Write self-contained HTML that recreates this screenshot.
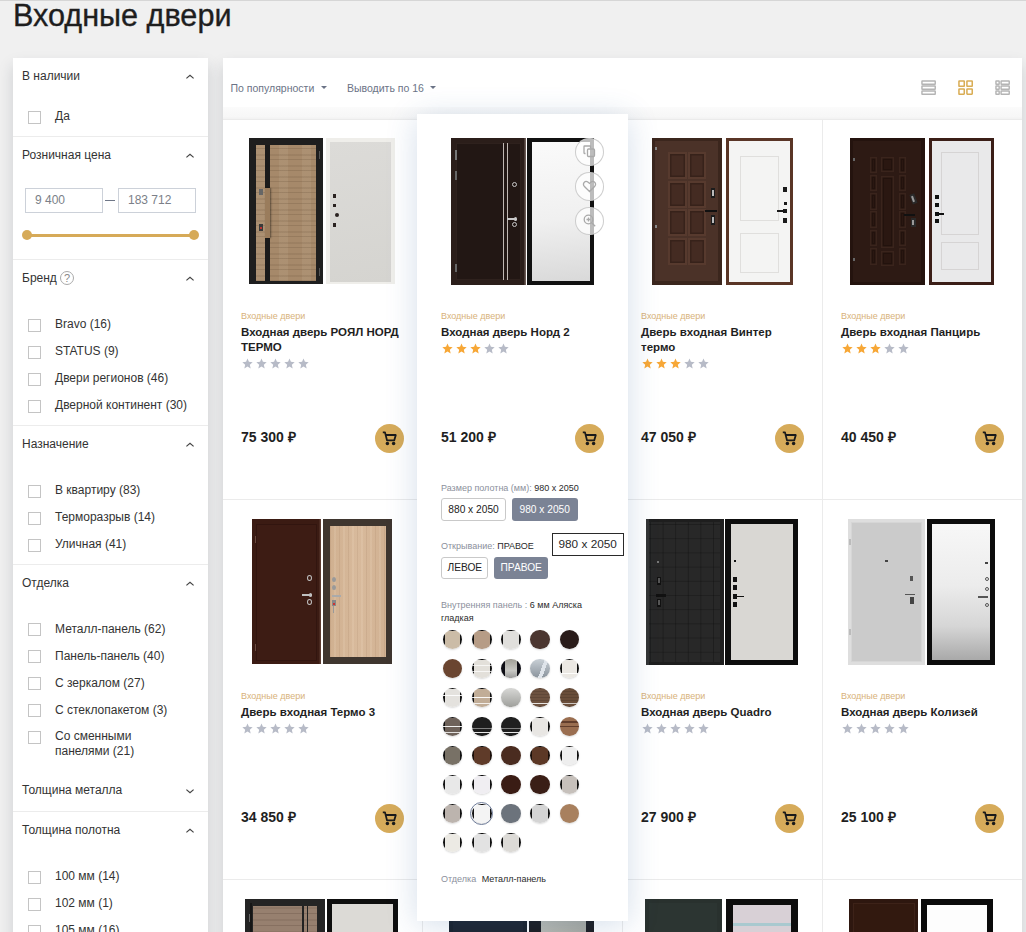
<!DOCTYPE html><html><head><meta charset="utf-8"><style>
*{margin:0;padding:0;box-sizing:border-box}
html,body{width:1026px;height:932px;overflow:hidden;background:#f0f0f0;font-family:"Liberation Sans",sans-serif}
.t{position:absolute;line-height:1;white-space:nowrap}
.cb{position:absolute;width:13px;height:13px;border:1px solid #c4c4c4;background:#fff}
.sep{position:absolute;left:13px;width:195px;height:1px;background:#ececec}
.chev{position:absolute;width:10px;height:6px}
</style></head><body>

<div style="position:absolute;left:0px;top:0px;width:1026px;height:1px;background:#d6d6d6"></div>
<div class="t" style="left:13px;top:-0.20px;font-size:30.6px;color:#1e1e1e;font-weight:400;-webkit-text-stroke:0.35px #1e1e1e">Входные двери</div>
<div style="position:absolute;left:13px;top:58px;width:195px;height:900px;background:#fff;box-shadow:0 8px 14px rgba(30,40,60,.17)"></div>
<div class="t" style="left:22px;top:70.44px;font-size:12px;color:#333;font-weight:400;">В наличии</div>
<svg style="position:absolute;left:185px;top:73px" width="10" height="7" viewBox="0 0 10 7"><path d="M1.4 5.4 L5 2.2 L8.6 5.4" fill="none" stroke="#444" stroke-width="1.2"/></svg>
<div class="cb" style="left:28px;top:111px"></div>
<div class="t" style="left:55px;top:110.24px;font-size:12px;color:#333;font-weight:400;">Да</div>
<div class="sep" style="top:136px"></div>
<div class="t" style="left:22px;top:149.24px;font-size:12px;color:#333;font-weight:400;">Розничная цена</div>
<svg style="position:absolute;left:185px;top:151.8px" width="10" height="7" viewBox="0 0 10 7"><path d="M1.4 5.4 L5 2.2 L8.6 5.4" fill="none" stroke="#444" stroke-width="1.2"/></svg>
<div style="position:absolute;left:25px;top:188px;width:78px;height:25px;border:1px solid #ccd1d9;background:#fff"></div>
<div style="position:absolute;left:118px;top:188px;width:78px;height:25px;border:1px solid #ccd1d9;background:#fff"></div>
<div class="t" style="left:35px;top:193.54px;font-size:12px;color:#7b7f88;font-weight:400;">9 400</div>
<div class="t" style="left:128px;top:193.54px;font-size:12px;color:#7b7f88;font-weight:400;">183 712</div>
<div style="position:absolute;left:105px;top:200px;width:10px;height:1px;background:#6f7787"></div>
<div style="position:absolute;left:27px;top:233.5px;width:167px;height:3px;background:#d6aa58"></div>
<div style="position:absolute;left:22px;top:230px;width:10px;height:10px;background:#d6aa58;border-radius:50%"></div>
<div style="position:absolute;left:189px;top:230px;width:10px;height:10px;background:#d6aa58;border-radius:50%"></div>
<div class="sep" style="top:259px"></div>
<div class="t" style="left:22px;top:272.44px;font-size:12px;color:#333;font-weight:400;">Бренд</div>
<svg style="position:absolute;left:185px;top:275px" width="10" height="7" viewBox="0 0 10 7"><path d="M1.4 5.4 L5 2.2 L8.6 5.4" fill="none" stroke="#444" stroke-width="1.2"/></svg>
<div style="position:absolute;left:60px;top:271px;width:14px;height:14px;border:1px solid #aaa;border-radius:50%;font-size:11px;line-height:12px;text-align:center;color:#888">?</div>
<div class="cb" style="left:28px;top:319px"></div>
<div class="t" style="left:55px;top:318.24px;font-size:12px;color:#333;font-weight:400;">Bravo (16)</div>
<div class="cb" style="left:28px;top:346px"></div>
<div class="t" style="left:55px;top:345.24px;font-size:12px;color:#333;font-weight:400;">STATUS (9)</div>
<div class="cb" style="left:28px;top:373px"></div>
<div class="t" style="left:55px;top:372.24px;font-size:12px;color:#333;font-weight:400;">Двери регионов (46)</div>
<div class="cb" style="left:28px;top:400px"></div>
<div class="t" style="left:55px;top:399.24px;font-size:12px;color:#333;font-weight:400;">Дверной континент (30)</div>
<div class="sep" style="top:425px"></div>
<div class="t" style="left:22px;top:438.04px;font-size:12px;color:#333;font-weight:400;">Назначение</div>
<svg style="position:absolute;left:185px;top:440.6px" width="10" height="7" viewBox="0 0 10 7"><path d="M1.4 5.4 L5 2.2 L8.6 5.4" fill="none" stroke="#444" stroke-width="1.2"/></svg>
<div class="cb" style="left:28px;top:484.5px"></div>
<div class="t" style="left:55px;top:483.74px;font-size:12px;color:#333;font-weight:400;">В квартиру (83)</div>
<div class="cb" style="left:28px;top:511.5px"></div>
<div class="t" style="left:55px;top:510.74px;font-size:12px;color:#333;font-weight:400;">Терморазрыв (14)</div>
<div class="cb" style="left:28px;top:538.5px"></div>
<div class="t" style="left:55px;top:537.74px;font-size:12px;color:#333;font-weight:400;">Уличная (41)</div>
<div class="sep" style="top:564px"></div>
<div class="t" style="left:22px;top:577.44px;font-size:12px;color:#333;font-weight:400;">Отделка</div>
<svg style="position:absolute;left:185px;top:580px" width="10" height="7" viewBox="0 0 10 7"><path d="M1.4 5.4 L5 2.2 L8.6 5.4" fill="none" stroke="#444" stroke-width="1.2"/></svg>
<div class="cb" style="left:28px;top:623.3px"></div>
<div class="t" style="left:55px;top:622.54px;font-size:12px;color:#333;font-weight:400;">Металл-панель (62)</div>
<div class="cb" style="left:28px;top:650.3px"></div>
<div class="t" style="left:55px;top:649.54px;font-size:12px;color:#333;font-weight:400;">Панель-панель (40)</div>
<div class="cb" style="left:28px;top:677.3px"></div>
<div class="t" style="left:55px;top:676.54px;font-size:12px;color:#333;font-weight:400;">С зеркалом (27)</div>
<div class="cb" style="left:28px;top:704.3px"></div>
<div class="t" style="left:55px;top:703.54px;font-size:12px;color:#333;font-weight:400;">С стеклопакетом (3)</div>
<div class="cb" style="left:28px;top:731.2px"></div>
<div class="t" style="left:55px;top:730.44px;font-size:12px;color:#333;font-weight:400;">Со сменными</div>
<div class="t" style="left:55px;top:745.24px;font-size:12px;color:#333;font-weight:400;">панелями (21)</div>
<div class="t" style="left:22px;top:784.44px;font-size:12px;color:#333;font-weight:400;">Толщина металла</div>
<svg style="position:absolute;left:185px;top:788px" width="10" height="7" viewBox="0 0 10 7"><path d="M1.4 1.6 L5 4.8 L8.6 1.6" fill="none" stroke="#444" stroke-width="1.2"/></svg>
<div class="sep" style="top:811px"></div>
<div class="t" style="left:22px;top:824.14px;font-size:12px;color:#333;font-weight:400;">Толщина полотна</div>
<svg style="position:absolute;left:185px;top:826.7px" width="10" height="7" viewBox="0 0 10 7"><path d="M1.4 5.4 L5 2.2 L8.6 5.4" fill="none" stroke="#444" stroke-width="1.2"/></svg>
<div class="cb" style="left:28px;top:871.2px"></div>
<div class="t" style="left:55px;top:870.44px;font-size:12px;color:#333;font-weight:400;">100 мм (14)</div>
<div class="cb" style="left:28px;top:898.2px"></div>
<div class="t" style="left:55px;top:897.44px;font-size:12px;color:#333;font-weight:400;">102 мм (1)</div>
<div class="cb" style="left:28px;top:925.2px"></div>
<div class="t" style="left:55px;top:924.44px;font-size:12px;color:#333;font-weight:400;">105 мм (16)</div>
<div style="position:absolute;left:223px;top:58px;width:799px;height:900px;background:#fff;box-shadow:0 8px 14px rgba(30,40,60,.17)"></div>
<div class="t" style="left:230.5px;top:83.31px;font-size:10.5px;color:#6b7386;font-weight:400;">По популярности</div>
<div style="position:absolute;left:320.5px;top:86px;width:0;height:0;border-left:3px solid transparent;border-right:3px solid transparent;border-top:3px solid #6b7386"></div>
<div class="t" style="left:347px;top:83.31px;font-size:10.5px;color:#6b7386;font-weight:400;">Выводить по 16</div>
<div style="position:absolute;left:430px;top:86px;width:0;height:0;border-left:3px solid transparent;border-right:3px solid transparent;border-top:3px solid #6b7386"></div>
<svg style="position:absolute;left:920.5px;top:80.3px" width="15.2" height="15.2" viewBox="0 0 16 16"><g fill="none" stroke="#b4b4b4" stroke-width="1.5"><rect x="1" y="1" width="14" height="3.4" rx=".3"/><rect x="1" y="6.3" width="14" height="3.4" rx=".3"/><rect x="1" y="11.6" width="14" height="3.4" rx=".3"/></g></svg>
<svg style="position:absolute;left:958.3px;top:80.3px" width="15.2" height="15.2" viewBox="0 0 16 16"><g fill="none" stroke="#d9ad55" stroke-width="1.6"><rect x="1" y="1" width="5.6" height="5.6" rx=".4"/><rect x="9.4" y="1" width="5.6" height="5.6" rx=".4"/><rect x="1" y="9.4" width="5.6" height="5.6" rx=".4"/><rect x="9.4" y="9.4" width="5.6" height="5.6" rx=".4"/></g></svg>
<svg style="position:absolute;left:995.3px;top:80.3px" width="15.2" height="15.2" viewBox="0 0 16 16"><g fill="none" stroke="#b4b4b4" stroke-width="1.5"><rect x="1" y="1" width="3.4" height="3.4" rx=".3"/><rect x="1" y="6.3" width="3.4" height="3.4" rx=".3"/><rect x="1" y="11.6" width="3.4" height="3.4" rx=".3"/><rect x="6.4" y="1" width="8.6" height="3.4" rx=".3"/><rect x="6.4" y="6.3" width="8.6" height="3.4" rx=".3"/><rect x="6.4" y="11.6" width="8.6" height="3.4" rx=".3"/></g></svg>
<div style="position:absolute;left:223px;top:106.5px;width:799px;height:12.5px;background:linear-gradient(180deg,#fbfbfb,#f7f7f7 80%,#f2f2f2)"></div>
<div style="position:absolute;left:223px;top:119px;width:799px;height:1px;background:#ebebeb"></div>
<div style="position:absolute;left:223px;top:499px;width:799px;height:1px;background:#ebebeb"></div>
<div style="position:absolute;left:223px;top:879.2px;width:799px;height:1px;background:#ebebeb"></div>
<div style="position:absolute;left:421.5px;top:120px;width:1px;height:812px;background:#ebebeb"></div>
<div style="position:absolute;left:621.5px;top:120px;width:1px;height:812px;background:#ebebeb"></div>
<div style="position:absolute;left:821.5px;top:120px;width:1px;height:812px;background:#ebebeb"></div>
<div style="position:absolute;left:248.5px;top:138px;width:74.5px;height:146.2px;overflow:hidden;background:#1e1e1e"><div style="position:absolute;left:7px;top:7px;width:60px;height:136px;background:repeating-linear-gradient(0deg,rgba(70,50,30,.16) 0 1px,transparent 1px 4px,rgba(70,50,30,.1) 4px 6px,transparent 6px 11px),repeating-linear-gradient(90deg,rgba(255,245,225,.07) 0 9px,transparent 9px 23px),#a6896a"></div><div style="position:absolute;left:16.5px;top:7px;width:4.7px;height:136px;background:#1b1b1b"></div><div style="position:absolute;left:16.3px;top:50px;width:5.5px;height:50px;background:#9a7c5c;box-shadow:1px 0 2px rgba(0,0,0,.45)"></div><div style="position:absolute;left:10.5px;top:51px;width:3.5px;height:6px;background:#666"></div><div style="position:absolute;left:10.5px;top:86px;width:3.5px;height:7px;background:#3a3a3a"></div><div style="position:absolute;left:11px;top:89px;width:2px;height:2px;background:#b33"></div><div style="position:absolute;left:70px;top:13px;width:1px;height:8px;background:#555"></div><div style="position:absolute;left:70px;top:130px;width:1px;height:8px;background:#555"></div></div>
<div style="position:absolute;left:326.2px;top:138px;width:69.3px;height:146.2px;overflow:hidden;background:#efeeea"><div style="position:absolute;left:4.3px;top:3.8px;width:61px;height:140px;background:linear-gradient(170deg,#dcdbd8,#d5d4d0)"></div><div style="position:absolute;left:7px;top:56px;width:3px;height:4px;background:#2a2220"></div><div style="position:absolute;left:7px;top:66px;width:3px;height:3px;background:#2a2220"></div><div style="position:absolute;left:8.5px;top:75px;width:4px;height:4px;background:#2a2220;border-radius:50%"></div><div style="position:absolute;left:7px;top:85px;width:3px;height:4px;background:#2a2220"></div></div>
<div style="position:absolute;left:651.7px;top:137.7px;width:70.0px;height:147.2px;overflow:hidden;background:#3b261d"><div style="position:absolute;left:3.5px;top:3.5px;width:63px;height:140px;background:#4b3228"></div><div style="position:absolute;left:16.6px;top:14.6px;width:18.4px;height:27px;background:#442b22;box-shadow:inset 0 0 0 2px #573a2e,inset 0 0 0 3.5px #37221a"></div><div style="position:absolute;left:16.6px;top:43.2px;width:18.4px;height:27px;background:#442b22;box-shadow:inset 0 0 0 2px #573a2e,inset 0 0 0 3.5px #37221a"></div><div style="position:absolute;left:16.6px;top:71.8px;width:18.4px;height:27px;background:#442b22;box-shadow:inset 0 0 0 2px #573a2e,inset 0 0 0 3.5px #37221a"></div><div style="position:absolute;left:16.6px;top:100.4px;width:18.4px;height:27px;background:#442b22;box-shadow:inset 0 0 0 2px #573a2e,inset 0 0 0 3.5px #37221a"></div><div style="position:absolute;left:36.400000000000006px;top:14.6px;width:18.4px;height:27px;background:#442b22;box-shadow:inset 0 0 0 2px #573a2e,inset 0 0 0 3.5px #37221a"></div><div style="position:absolute;left:36.400000000000006px;top:43.2px;width:18.4px;height:27px;background:#442b22;box-shadow:inset 0 0 0 2px #573a2e,inset 0 0 0 3.5px #37221a"></div><div style="position:absolute;left:36.400000000000006px;top:71.8px;width:18.4px;height:27px;background:#442b22;box-shadow:inset 0 0 0 2px #573a2e,inset 0 0 0 3.5px #37221a"></div><div style="position:absolute;left:36.400000000000006px;top:100.4px;width:18.4px;height:27px;background:#442b22;box-shadow:inset 0 0 0 2px #573a2e,inset 0 0 0 3.5px #37221a"></div><div style="position:absolute;left:59.5px;top:50px;width:3.5px;height:10px;background:#1c1c1c"></div><div style="position:absolute;left:60.2px;top:52px;width:2px;height:6px;background:#bbb"></div><div style="position:absolute;left:53px;top:72px;width:12px;height:2.5px;background:#111"></div><div style="position:absolute;left:59.5px;top:77px;width:3.5px;height:10px;background:#1c1c1c"></div><div style="position:absolute;left:60.2px;top:79px;width:2px;height:6px;background:#bbb"></div><div style="position:absolute;left:3px;top:9px;width:2px;height:3px;background:#888"></div><div style="position:absolute;left:3px;top:87px;width:2px;height:3px;background:#888"></div></div>
<div style="position:absolute;left:726px;top:137.7px;width:67.0px;height:147.2px;overflow:hidden;background:#5a3526"><div style="position:absolute;left:3px;top:3px;width:61px;height:141px;background:#f4f4f3"></div><div style="position:absolute;left:13.6px;top:18px;width:39.4px;height:65px;box-shadow:inset 0 0 0 1px #e0dfdd"></div><div style="position:absolute;left:13.6px;top:95px;width:39.4px;height:40px;box-shadow:inset 0 0 0 1px #e0dfdd"></div><div style="position:absolute;left:57.3px;top:49.5px;width:3.5px;height:5px;background:#1a1a1a"></div><div style="position:absolute;left:57.8px;top:64px;width:3px;height:3px;background:#1a1a1a"></div><div style="position:absolute;left:50.5px;top:72.3px;width:10px;height:2px;background:#1a1a1a"></div><div style="position:absolute;left:57.3px;top:71px;width:3.5px;height:4.5px;background:#1a1a1a"></div><div style="position:absolute;left:57.3px;top:80.5px;width:3.5px;height:4.5px;background:#1a1a1a"></div></div>
<div style="position:absolute;left:850.3px;top:137.7px;width:74.4px;height:147.2px;overflow:hidden;background:#24130e"><div style="position:absolute;left:3px;top:3px;width:68px;height:141px;background:#2d1a14"></div><div style="position:absolute;left:19.7px;top:18.9px;width:7px;height:16.5px;background:#2a1711;box-shadow:inset 0 0 0 1.5px #3a241c,inset 0 0 0 3px #22120d"></div><div style="position:absolute;left:19.7px;top:37.2px;width:7px;height:16.5px;background:#2a1711;box-shadow:inset 0 0 0 1.5px #3a241c,inset 0 0 0 3px #22120d"></div><div style="position:absolute;left:19.7px;top:55.5px;width:7px;height:16.5px;background:#2a1711;box-shadow:inset 0 0 0 1.5px #3a241c,inset 0 0 0 3px #22120d"></div><div style="position:absolute;left:19.7px;top:73.80000000000001px;width:7px;height:16.5px;background:#2a1711;box-shadow:inset 0 0 0 1.5px #3a241c,inset 0 0 0 3px #22120d"></div><div style="position:absolute;left:19.7px;top:92.1px;width:7px;height:16.5px;background:#2a1711;box-shadow:inset 0 0 0 1.5px #3a241c,inset 0 0 0 3px #22120d"></div><div style="position:absolute;left:19.7px;top:110.4px;width:7px;height:16.5px;background:#2a1711;box-shadow:inset 0 0 0 1.5px #3a241c,inset 0 0 0 3px #22120d"></div><div style="position:absolute;left:48.9px;top:18.9px;width:7px;height:16.5px;background:#2a1711;box-shadow:inset 0 0 0 1.5px #3a241c,inset 0 0 0 3px #22120d"></div><div style="position:absolute;left:48.9px;top:37.2px;width:7px;height:16.5px;background:#2a1711;box-shadow:inset 0 0 0 1.5px #3a241c,inset 0 0 0 3px #22120d"></div><div style="position:absolute;left:48.9px;top:55.5px;width:7px;height:16.5px;background:#2a1711;box-shadow:inset 0 0 0 1.5px #3a241c,inset 0 0 0 3px #22120d"></div><div style="position:absolute;left:48.9px;top:73.80000000000001px;width:7px;height:16.5px;background:#2a1711;box-shadow:inset 0 0 0 1.5px #3a241c,inset 0 0 0 3px #22120d"></div><div style="position:absolute;left:48.9px;top:92.1px;width:7px;height:16.5px;background:#2a1711;box-shadow:inset 0 0 0 1.5px #3a241c,inset 0 0 0 3px #22120d"></div><div style="position:absolute;left:48.9px;top:110.4px;width:7px;height:16.5px;background:#2a1711;box-shadow:inset 0 0 0 1.5px #3a241c,inset 0 0 0 3px #22120d"></div><div style="position:absolute;left:31px;top:18.9px;width:13px;height:15.5px;background:#2a1711;box-shadow:inset 0 0 0 1.5px #3a241c,inset 0 0 0 3px #22120d"></div><div style="position:absolute;left:31px;top:38.7px;width:13px;height:72px;background:#2a1711;box-shadow:inset 0 0 0 1.5px #3a241c,inset 0 0 0 3px #22120d"></div><div style="position:absolute;left:31px;top:113.3px;width:13px;height:15.5px;background:#2a1711;box-shadow:inset 0 0 0 1.5px #3a241c,inset 0 0 0 3px #22120d"></div><div style="position:absolute;left:60.5px;top:56px;width:4.5px;height:10px;background:#2a2a2a;transform:rotate(-20deg)"></div><div style="position:absolute;left:61.8px;top:58px;width:2px;height:6px;background:#9a9a9a;transform:rotate(-20deg)"></div><div style="position:absolute;left:54px;top:76px;width:11px;height:2.2px;background:#111"></div><div style="position:absolute;left:61px;top:80px;width:4.5px;height:9px;background:#2a2a2a"></div><div style="position:absolute;left:62.2px;top:82px;width:2px;height:5px;background:#9a9a9a"></div><div style="position:absolute;left:3px;top:20px;width:1.5px;height:3px;background:#666"></div><div style="position:absolute;left:3px;top:120px;width:1.5px;height:3px;background:#666"></div></div>
<div style="position:absolute;left:928.7px;top:137.7px;width:65.3px;height:147.2px;overflow:hidden;background:#3b1e17"><div style="position:absolute;left:3px;top:3px;width:59.3px;height:141px;background:#e9e9ea"></div><div style="position:absolute;left:12.6px;top:14.6px;width:37.7px;height:82.4px;box-shadow:inset 0 0 0 1px #d6d4d4"></div><div style="position:absolute;left:12.6px;top:104px;width:37.7px;height:28.3px;box-shadow:inset 0 0 0 1px #d6d4d4"></div><div style="position:absolute;left:6.6px;top:57px;width:3.4px;height:4px;background:#111"></div><div style="position:absolute;left:6.6px;top:65px;width:3.4px;height:4px;background:#111"></div><div style="position:absolute;left:6.6px;top:74px;width:3.4px;height:4px;background:#111"></div><div style="position:absolute;left:8px;top:75.5px;width:7px;height:1.5px;background:#111"></div><div style="position:absolute;left:6.6px;top:81px;width:3.4px;height:4px;background:#111"></div></div>
<div style="position:absolute;left:251.6px;top:518.6px;width:69.3px;height:145.8px;overflow:hidden;background:#3b1b13;box-shadow:inset -1.5px 0 0 #5b3b30"><div style="position:absolute;left:4.5px;top:5px;width:61px;height:137px;background:#3d1c14;box-shadow:inset 0 0 0 1px #32150f"></div><div style="position:absolute;left:3px;top:17px;width:1.5px;height:7px;background:#6a4a40"></div><div style="position:absolute;left:3px;top:125px;width:1.5px;height:7px;background:#6a4a40"></div><div style="position:absolute;left:55.5px;top:56px;width:5px;height:6px;border:1.3px solid #c0c0c0;border-radius:50%"></div><div style="position:absolute;left:50px;top:75.5px;width:10px;height:1.8px;background:#c0c0c0"></div><div style="position:absolute;left:57px;top:74.5px;width:3.5px;height:3.5px;background:#c0c0c0;border-radius:50%"></div><div style="position:absolute;left:55.5px;top:80px;width:5px;height:6px;border:1.3px solid #c0c0c0;border-radius:50%"></div></div>
<div style="position:absolute;left:323.1px;top:518.6px;width:69.2px;height:145.8px;overflow:hidden;background:#3f362f"><div style="position:absolute;left:7px;top:7.4px;width:56px;height:131px;background:repeating-linear-gradient(90deg,rgba(120,80,50,.10) 0 1px,transparent 1px 4px,rgba(255,240,220,.12) 4px 6px,transparent 6px 9px),linear-gradient(90deg,#d0b090,#d8ba9c 50%,#d1b192)"></div><div style="position:absolute;left:8.5px;top:58px;width:4px;height:5px;background:#999;border-radius:50%"></div><div style="position:absolute;left:8.5px;top:66px;width:4px;height:5px;background:#999;border-radius:50%"></div><div style="position:absolute;left:9px;top:76.5px;width:9px;height:2px;background:#aaa"></div><div style="position:absolute;left:9px;top:81px;width:3.5px;height:6px;background:#888"></div><div style="position:absolute;left:10px;top:84px;width:1.5px;height:2px;background:#c33"></div><div style="position:absolute;left:10px;top:87px;width:1px;height:7px;background:#999"></div></div>
<div style="position:absolute;left:646.1px;top:518.5px;width:77.6px;height:146.4px;overflow:hidden;background:#1e1e1e"><div style="position:absolute;left:3px;top:3px;width:71px;height:140px;background:#282828;background-image:linear-gradient(90deg,rgba(0,0,0,.25) 1px,transparent 1px),linear-gradient(0deg,rgba(0,0,0,.22) 1px,transparent 1px);background-size:12.6px 100%,100% 14.2px;background-position:1px 0,0 3px"></div><div style="position:absolute;left:0px;top:0px;width:3px;height:146.4px;background:#333"></div><div style="position:absolute;left:10.5px;top:42px;width:2px;height:2px;background:#777"></div><div style="position:absolute;left:11px;top:58px;width:4px;height:8px;background:#111"></div><div style="position:absolute;left:11.5px;top:59.5px;width:2.5px;height:5px;background:#555"></div><div style="position:absolute;left:10px;top:75.5px;width:10px;height:2.5px;background:#111"></div><div style="position:absolute;left:11px;top:80px;width:4px;height:8px;background:#111"></div><div style="position:absolute;left:11.5px;top:81.5px;width:2.5px;height:5px;background:#555"></div></div>
<div style="position:absolute;left:725.3px;top:518.5px;width:72.7px;height:146.4px;overflow:hidden;background:#0d0d0d"><div style="position:absolute;left:5.5px;top:5px;width:62.7px;height:136.4px;background:#d9d7d3"></div><div style="position:absolute;left:9px;top:41px;width:2px;height:2px;background:#111"></div><div style="position:absolute;left:8px;top:58px;width:4px;height:5px;background:#111"></div><div style="position:absolute;left:8px;top:66px;width:4px;height:5px;background:#111"></div><div style="position:absolute;left:8px;top:75px;width:4px;height:5px;background:#111"></div><div style="position:absolute;left:11px;top:77px;width:8px;height:1.5px;background:#111"></div><div style="position:absolute;left:8px;top:83px;width:4px;height:5px;background:#111"></div></div>
<div style="position:absolute;left:848.3px;top:518.5px;width:76.4px;height:146.4px;overflow:hidden;background:#dedede"><div style="position:absolute;left:3px;top:3px;width:70.4px;height:140.4px;background:#cbcbcb;box-shadow:inset 0 0 0 1px #d6d6d6"></div><div style="position:absolute;left:0.5px;top:20px;width:2px;height:6px;background:#bbb"></div><div style="position:absolute;left:0.5px;top:110px;width:2px;height:6px;background:#bbb"></div><div style="position:absolute;left:37px;top:41px;width:2.5px;height:2.5px;background:#444"></div><div style="position:absolute;left:62px;top:57px;width:3px;height:5px;background:#555"></div><div style="position:absolute;left:57px;top:75px;width:10px;height:1.5px;background:#555"></div><div style="position:absolute;left:62px;top:78px;width:4px;height:7px;background:#444"></div></div>
<div style="position:absolute;left:926.7px;top:518.5px;width:68.1px;height:146.4px;overflow:hidden;background:#0c0c0c"><div style="position:absolute;left:5px;top:5px;width:58.1px;height:136.4px;background:linear-gradient(180deg,#f7f7f7 0%,#ececec 45%,#d6d6d6 75%,#a9a9a9 100%)"></div><div style="position:absolute;left:58.5px;top:43px;width:2.5px;height:2.5px;background:#444"></div><div style="position:absolute;left:58px;top:58px;width:4px;height:4px;border:1px solid #555;border-radius:50%"></div><div style="position:absolute;left:58px;top:68px;width:4px;height:4px;border:1px solid #555;border-radius:50%"></div><div style="position:absolute;left:51px;top:77.5px;width:10px;height:1.5px;background:#555"></div><div style="position:absolute;left:58px;top:84px;width:4px;height:4px;border:1px solid #555;border-radius:50%"></div></div>
<div style="position:absolute;left:245.4px;top:899px;width:79.9px;height:61.0px;overflow:hidden;background:#242424"><div style="position:absolute;left:8px;top:7px;width:64px;height:80px;background:repeating-linear-gradient(0deg,rgba(60,40,30,.18) 0 1px,transparent 1px 5px,rgba(60,40,30,.1) 5px 7px,transparent 7px 12px),#97806f"></div><div style="position:absolute;left:5px;top:4px;width:2px;height:80px;background:#161616"></div><div style="position:absolute;left:57px;top:7px;width:1.3px;height:80px;background:#222"></div><div style="position:absolute;left:61.5px;top:7px;width:1.3px;height:80px;background:#222"></div><div style="position:absolute;left:4px;top:15px;width:1px;height:8px;background:#666"></div></div>
<div style="position:absolute;left:327.3px;top:899px;width:71.1px;height:61.0px;overflow:hidden;background:#0e0e0e"><div style="position:absolute;left:5px;top:5px;width:61px;height:80px;background:#dcdad6"></div></div>
<div style="position:absolute;left:449.3px;top:899px;width:77.4px;height:61.0px;overflow:hidden;background:#1a212b"><div style="position:absolute;left:4px;top:4px;width:70px;height:80px;background:#1e2530"></div></div>
<div style="position:absolute;left:529.2px;top:899px;width:64.8px;height:61.0px;overflow:hidden;background:#1c1c20"><div style="position:absolute;left:12px;top:0px;width:45px;height:80px;background:linear-gradient(90deg,#b9bab2,#a9aaa2)"></div><div style="position:absolute;left:38px;top:4px;width:6px;height:5px;background:#fff;border-radius:50%;filter:blur(1px)"></div></div>
<div style="position:absolute;left:645.2px;top:899px;width:76.6px;height:61.0px;overflow:hidden;background:#29312e"><div style="position:absolute;left:4px;top:4px;width:68px;height:80px;background:#2c3532"></div></div>
<div style="position:absolute;left:725.9px;top:899px;width:72.0px;height:61.0px;overflow:hidden;background:#0d0d0d"><div style="position:absolute;left:7px;top:6px;width:58px;height:80px;background:#d8d0d6"></div><div style="position:absolute;left:7px;top:24px;width:58px;height:3px;background:#a9c9cf"></div></div>
<div style="position:absolute;left:848.7px;top:899px;width:69.6px;height:61.0px;overflow:hidden;background:#2e170f"><div style="position:absolute;left:4px;top:4px;width:62px;height:80px;background:#32190f;box-shadow:inset 0 0 0 1px #3d2218"></div></div>
<div style="position:absolute;left:921.2px;top:899px;width:72.0px;height:61.0px;overflow:hidden;background:#0b0b0b"><div style="position:absolute;left:6px;top:6px;width:60px;height:80px;background:#fdfdfd"></div></div>
<div class="t" style="left:241px;top:312.38px;font-size:9px;color:#d8b27a;font-weight:400;">Входные двери</div>
<div class="t" style="left:241px;top:326.57px;font-size:11.5px;color:#1f1f1f;font-weight:700;">Входная дверь РОЯЛ НОРД</div>
<div class="t" style="left:241px;top:341.77px;font-size:11.5px;color:#1f1f1f;font-weight:700;">ТЕРМО</div>
<svg style="position:absolute;left:241.5px;top:358.0px" width="11" height="11" viewBox="0 0 10 10"><path d="M5 .5 L6.3 3.5 L9.7 3.8 L7.1 6.1 L7.9 9.5 L5 7.7 L2.1 9.5 L2.9 6.1 L.3 3.8 L3.7 3.5Z" fill="#b7bbc7"/></svg>
<svg style="position:absolute;left:255.7px;top:358.0px" width="11" height="11" viewBox="0 0 10 10"><path d="M5 .5 L6.3 3.5 L9.7 3.8 L7.1 6.1 L7.9 9.5 L5 7.7 L2.1 9.5 L2.9 6.1 L.3 3.8 L3.7 3.5Z" fill="#b7bbc7"/></svg>
<svg style="position:absolute;left:269.9px;top:358.0px" width="11" height="11" viewBox="0 0 10 10"><path d="M5 .5 L6.3 3.5 L9.7 3.8 L7.1 6.1 L7.9 9.5 L5 7.7 L2.1 9.5 L2.9 6.1 L.3 3.8 L3.7 3.5Z" fill="#b7bbc7"/></svg>
<svg style="position:absolute;left:284.1px;top:358.0px" width="11" height="11" viewBox="0 0 10 10"><path d="M5 .5 L6.3 3.5 L9.7 3.8 L7.1 6.1 L7.9 9.5 L5 7.7 L2.1 9.5 L2.9 6.1 L.3 3.8 L3.7 3.5Z" fill="#b7bbc7"/></svg>
<svg style="position:absolute;left:298.3px;top:358.0px" width="11" height="11" viewBox="0 0 10 10"><path d="M5 .5 L6.3 3.5 L9.7 3.8 L7.1 6.1 L7.9 9.5 L5 7.7 L2.1 9.5 L2.9 6.1 L.3 3.8 L3.7 3.5Z" fill="#b7bbc7"/></svg>
<div class="t" style="left:241px;top:429.85px;font-size:14px;color:#1f1f1f;font-weight:700;">75 300 ₽</div>
<div style="position:absolute;left:374.8px;top:423.7px;width:29px;height:29px;background:#d6ab5a;border-radius:50%"></div>
<svg style="position:absolute;left:381.8px;top:430.7px" width="15" height="15" viewBox="0 0 15 15"><path d="M.8 1.4 H3 L5 9.4 H12.2 L13.8 4 H3.8" fill="none" stroke="#1a1a1a" stroke-width="1.8" stroke-linejoin="round"/><circle cx="5.4" cy="12.6" r="1.75" fill="#1a1a1a"/><circle cx="11.6" cy="12.6" r="1.75" fill="#1a1a1a"/></svg>
<div class="t" style="left:641px;top:312.38px;font-size:9px;color:#d8b27a;font-weight:400;">Входные двери</div>
<div class="t" style="left:641px;top:326.57px;font-size:11.5px;color:#1f1f1f;font-weight:700;">Дверь входная Винтер</div>
<div class="t" style="left:641px;top:341.77px;font-size:11.5px;color:#1f1f1f;font-weight:700;">термо</div>
<svg style="position:absolute;left:641.5px;top:358.0px" width="11" height="11" viewBox="0 0 10 10"><path d="M5 .5 L6.3 3.5 L9.7 3.8 L7.1 6.1 L7.9 9.5 L5 7.7 L2.1 9.5 L2.9 6.1 L.3 3.8 L3.7 3.5Z" fill="#f7a736"/></svg>
<svg style="position:absolute;left:655.7px;top:358.0px" width="11" height="11" viewBox="0 0 10 10"><path d="M5 .5 L6.3 3.5 L9.7 3.8 L7.1 6.1 L7.9 9.5 L5 7.7 L2.1 9.5 L2.9 6.1 L.3 3.8 L3.7 3.5Z" fill="#f7a736"/></svg>
<svg style="position:absolute;left:669.9px;top:358.0px" width="11" height="11" viewBox="0 0 10 10"><path d="M5 .5 L6.3 3.5 L9.7 3.8 L7.1 6.1 L7.9 9.5 L5 7.7 L2.1 9.5 L2.9 6.1 L.3 3.8 L3.7 3.5Z" fill="#f7a736"/></svg>
<svg style="position:absolute;left:684.1px;top:358.0px" width="11" height="11" viewBox="0 0 10 10"><path d="M5 .5 L6.3 3.5 L9.7 3.8 L7.1 6.1 L7.9 9.5 L5 7.7 L2.1 9.5 L2.9 6.1 L.3 3.8 L3.7 3.5Z" fill="#b7bbc7"/></svg>
<svg style="position:absolute;left:698.3px;top:358.0px" width="11" height="11" viewBox="0 0 10 10"><path d="M5 .5 L6.3 3.5 L9.7 3.8 L7.1 6.1 L7.9 9.5 L5 7.7 L2.1 9.5 L2.9 6.1 L.3 3.8 L3.7 3.5Z" fill="#b7bbc7"/></svg>
<div class="t" style="left:641px;top:429.85px;font-size:14px;color:#1f1f1f;font-weight:700;">47 050 ₽</div>
<div style="position:absolute;left:774.8px;top:423.7px;width:29px;height:29px;background:#d6ab5a;border-radius:50%"></div>
<svg style="position:absolute;left:781.8px;top:430.7px" width="15" height="15" viewBox="0 0 15 15"><path d="M.8 1.4 H3 L5 9.4 H12.2 L13.8 4 H3.8" fill="none" stroke="#1a1a1a" stroke-width="1.8" stroke-linejoin="round"/><circle cx="5.4" cy="12.6" r="1.75" fill="#1a1a1a"/><circle cx="11.6" cy="12.6" r="1.75" fill="#1a1a1a"/></svg>
<div class="t" style="left:841px;top:312.38px;font-size:9px;color:#d8b27a;font-weight:400;">Входные двери</div>
<div class="t" style="left:841px;top:326.57px;font-size:11.5px;color:#1f1f1f;font-weight:700;">Дверь входная Панцирь</div>
<svg style="position:absolute;left:841.5px;top:342.8px" width="11" height="11" viewBox="0 0 10 10"><path d="M5 .5 L6.3 3.5 L9.7 3.8 L7.1 6.1 L7.9 9.5 L5 7.7 L2.1 9.5 L2.9 6.1 L.3 3.8 L3.7 3.5Z" fill="#f7a736"/></svg>
<svg style="position:absolute;left:855.7px;top:342.8px" width="11" height="11" viewBox="0 0 10 10"><path d="M5 .5 L6.3 3.5 L9.7 3.8 L7.1 6.1 L7.9 9.5 L5 7.7 L2.1 9.5 L2.9 6.1 L.3 3.8 L3.7 3.5Z" fill="#f7a736"/></svg>
<svg style="position:absolute;left:869.9px;top:342.8px" width="11" height="11" viewBox="0 0 10 10"><path d="M5 .5 L6.3 3.5 L9.7 3.8 L7.1 6.1 L7.9 9.5 L5 7.7 L2.1 9.5 L2.9 6.1 L.3 3.8 L3.7 3.5Z" fill="#f7a736"/></svg>
<svg style="position:absolute;left:884.1px;top:342.8px" width="11" height="11" viewBox="0 0 10 10"><path d="M5 .5 L6.3 3.5 L9.7 3.8 L7.1 6.1 L7.9 9.5 L5 7.7 L2.1 9.5 L2.9 6.1 L.3 3.8 L3.7 3.5Z" fill="#b7bbc7"/></svg>
<svg style="position:absolute;left:898.3px;top:342.8px" width="11" height="11" viewBox="0 0 10 10"><path d="M5 .5 L6.3 3.5 L9.7 3.8 L7.1 6.1 L7.9 9.5 L5 7.7 L2.1 9.5 L2.9 6.1 L.3 3.8 L3.7 3.5Z" fill="#b7bbc7"/></svg>
<div class="t" style="left:841px;top:429.85px;font-size:14px;color:#1f1f1f;font-weight:700;">40 450 ₽</div>
<div style="position:absolute;left:974.8px;top:423.7px;width:29px;height:29px;background:#d6ab5a;border-radius:50%"></div>
<svg style="position:absolute;left:981.8px;top:430.7px" width="15" height="15" viewBox="0 0 15 15"><path d="M.8 1.4 H3 L5 9.4 H12.2 L13.8 4 H3.8" fill="none" stroke="#1a1a1a" stroke-width="1.8" stroke-linejoin="round"/><circle cx="5.4" cy="12.6" r="1.75" fill="#1a1a1a"/><circle cx="11.6" cy="12.6" r="1.75" fill="#1a1a1a"/></svg>
<div class="t" style="left:241px;top:692.38px;font-size:9px;color:#d8b27a;font-weight:400;">Входные двери</div>
<div class="t" style="left:241px;top:706.57px;font-size:11.5px;color:#1f1f1f;font-weight:700;">Дверь входная Термо 3</div>
<svg style="position:absolute;left:241.5px;top:722.8px" width="11" height="11" viewBox="0 0 10 10"><path d="M5 .5 L6.3 3.5 L9.7 3.8 L7.1 6.1 L7.9 9.5 L5 7.7 L2.1 9.5 L2.9 6.1 L.3 3.8 L3.7 3.5Z" fill="#b7bbc7"/></svg>
<svg style="position:absolute;left:255.7px;top:722.8px" width="11" height="11" viewBox="0 0 10 10"><path d="M5 .5 L6.3 3.5 L9.7 3.8 L7.1 6.1 L7.9 9.5 L5 7.7 L2.1 9.5 L2.9 6.1 L.3 3.8 L3.7 3.5Z" fill="#b7bbc7"/></svg>
<svg style="position:absolute;left:269.9px;top:722.8px" width="11" height="11" viewBox="0 0 10 10"><path d="M5 .5 L6.3 3.5 L9.7 3.8 L7.1 6.1 L7.9 9.5 L5 7.7 L2.1 9.5 L2.9 6.1 L.3 3.8 L3.7 3.5Z" fill="#b7bbc7"/></svg>
<svg style="position:absolute;left:284.1px;top:722.8px" width="11" height="11" viewBox="0 0 10 10"><path d="M5 .5 L6.3 3.5 L9.7 3.8 L7.1 6.1 L7.9 9.5 L5 7.7 L2.1 9.5 L2.9 6.1 L.3 3.8 L3.7 3.5Z" fill="#b7bbc7"/></svg>
<svg style="position:absolute;left:298.3px;top:722.8px" width="11" height="11" viewBox="0 0 10 10"><path d="M5 .5 L6.3 3.5 L9.7 3.8 L7.1 6.1 L7.9 9.5 L5 7.7 L2.1 9.5 L2.9 6.1 L.3 3.8 L3.7 3.5Z" fill="#b7bbc7"/></svg>
<div class="t" style="left:241px;top:809.85px;font-size:14px;color:#1f1f1f;font-weight:700;">34 850 ₽</div>
<div style="position:absolute;left:374.8px;top:803.7px;width:29px;height:29px;background:#d6ab5a;border-radius:50%"></div>
<svg style="position:absolute;left:381.8px;top:810.7px" width="15" height="15" viewBox="0 0 15 15"><path d="M.8 1.4 H3 L5 9.4 H12.2 L13.8 4 H3.8" fill="none" stroke="#1a1a1a" stroke-width="1.8" stroke-linejoin="round"/><circle cx="5.4" cy="12.6" r="1.75" fill="#1a1a1a"/><circle cx="11.6" cy="12.6" r="1.75" fill="#1a1a1a"/></svg>
<div class="t" style="left:641px;top:692.38px;font-size:9px;color:#d8b27a;font-weight:400;">Входные двери</div>
<div class="t" style="left:641px;top:706.57px;font-size:11.5px;color:#1f1f1f;font-weight:700;">Входная дверь Quadro</div>
<svg style="position:absolute;left:641.5px;top:722.8px" width="11" height="11" viewBox="0 0 10 10"><path d="M5 .5 L6.3 3.5 L9.7 3.8 L7.1 6.1 L7.9 9.5 L5 7.7 L2.1 9.5 L2.9 6.1 L.3 3.8 L3.7 3.5Z" fill="#b7bbc7"/></svg>
<svg style="position:absolute;left:655.7px;top:722.8px" width="11" height="11" viewBox="0 0 10 10"><path d="M5 .5 L6.3 3.5 L9.7 3.8 L7.1 6.1 L7.9 9.5 L5 7.7 L2.1 9.5 L2.9 6.1 L.3 3.8 L3.7 3.5Z" fill="#b7bbc7"/></svg>
<svg style="position:absolute;left:669.9px;top:722.8px" width="11" height="11" viewBox="0 0 10 10"><path d="M5 .5 L6.3 3.5 L9.7 3.8 L7.1 6.1 L7.9 9.5 L5 7.7 L2.1 9.5 L2.9 6.1 L.3 3.8 L3.7 3.5Z" fill="#b7bbc7"/></svg>
<svg style="position:absolute;left:684.1px;top:722.8px" width="11" height="11" viewBox="0 0 10 10"><path d="M5 .5 L6.3 3.5 L9.7 3.8 L7.1 6.1 L7.9 9.5 L5 7.7 L2.1 9.5 L2.9 6.1 L.3 3.8 L3.7 3.5Z" fill="#b7bbc7"/></svg>
<svg style="position:absolute;left:698.3px;top:722.8px" width="11" height="11" viewBox="0 0 10 10"><path d="M5 .5 L6.3 3.5 L9.7 3.8 L7.1 6.1 L7.9 9.5 L5 7.7 L2.1 9.5 L2.9 6.1 L.3 3.8 L3.7 3.5Z" fill="#b7bbc7"/></svg>
<div class="t" style="left:641px;top:809.85px;font-size:14px;color:#1f1f1f;font-weight:700;">27 900 ₽</div>
<div style="position:absolute;left:774.8px;top:803.7px;width:29px;height:29px;background:#d6ab5a;border-radius:50%"></div>
<svg style="position:absolute;left:781.8px;top:810.7px" width="15" height="15" viewBox="0 0 15 15"><path d="M.8 1.4 H3 L5 9.4 H12.2 L13.8 4 H3.8" fill="none" stroke="#1a1a1a" stroke-width="1.8" stroke-linejoin="round"/><circle cx="5.4" cy="12.6" r="1.75" fill="#1a1a1a"/><circle cx="11.6" cy="12.6" r="1.75" fill="#1a1a1a"/></svg>
<div class="t" style="left:841px;top:692.38px;font-size:9px;color:#d8b27a;font-weight:400;">Входные двери</div>
<div class="t" style="left:841px;top:706.57px;font-size:11.5px;color:#1f1f1f;font-weight:700;">Входная дверь Колизей</div>
<svg style="position:absolute;left:841.5px;top:722.8px" width="11" height="11" viewBox="0 0 10 10"><path d="M5 .5 L6.3 3.5 L9.7 3.8 L7.1 6.1 L7.9 9.5 L5 7.7 L2.1 9.5 L2.9 6.1 L.3 3.8 L3.7 3.5Z" fill="#b7bbc7"/></svg>
<svg style="position:absolute;left:855.7px;top:722.8px" width="11" height="11" viewBox="0 0 10 10"><path d="M5 .5 L6.3 3.5 L9.7 3.8 L7.1 6.1 L7.9 9.5 L5 7.7 L2.1 9.5 L2.9 6.1 L.3 3.8 L3.7 3.5Z" fill="#b7bbc7"/></svg>
<svg style="position:absolute;left:869.9px;top:722.8px" width="11" height="11" viewBox="0 0 10 10"><path d="M5 .5 L6.3 3.5 L9.7 3.8 L7.1 6.1 L7.9 9.5 L5 7.7 L2.1 9.5 L2.9 6.1 L.3 3.8 L3.7 3.5Z" fill="#b7bbc7"/></svg>
<svg style="position:absolute;left:884.1px;top:722.8px" width="11" height="11" viewBox="0 0 10 10"><path d="M5 .5 L6.3 3.5 L9.7 3.8 L7.1 6.1 L7.9 9.5 L5 7.7 L2.1 9.5 L2.9 6.1 L.3 3.8 L3.7 3.5Z" fill="#b7bbc7"/></svg>
<svg style="position:absolute;left:898.3px;top:722.8px" width="11" height="11" viewBox="0 0 10 10"><path d="M5 .5 L6.3 3.5 L9.7 3.8 L7.1 6.1 L7.9 9.5 L5 7.7 L2.1 9.5 L2.9 6.1 L.3 3.8 L3.7 3.5Z" fill="#b7bbc7"/></svg>
<div class="t" style="left:841px;top:809.85px;font-size:14px;color:#1f1f1f;font-weight:700;">25 100 ₽</div>
<div style="position:absolute;left:974.8px;top:803.7px;width:29px;height:29px;background:#d6ab5a;border-radius:50%"></div>
<svg style="position:absolute;left:981.8px;top:810.7px" width="15" height="15" viewBox="0 0 15 15"><path d="M.8 1.4 H3 L5 9.4 H12.2 L13.8 4 H3.8" fill="none" stroke="#1a1a1a" stroke-width="1.8" stroke-linejoin="round"/><circle cx="5.4" cy="12.6" r="1.75" fill="#1a1a1a"/><circle cx="11.6" cy="12.6" r="1.75" fill="#1a1a1a"/></svg>
<div style="position:absolute;left:417px;top:114px;width:211px;height:806.5px;background:#fff;box-shadow:0 4px 30px rgba(40,90,150,.2)"></div>
<div style="position:absolute;left:450.7px;top:137.8px;width:75.3px;height:146.9px;overflow:hidden;background:#2b1e1a;box-shadow:inset -1.5px 0 0 #6a5a55"><div style="position:absolute;left:5px;top:5px;width:65px;height:137px;background:#221714;box-shadow:inset 0 0 0 1px #2e211d"></div><div style="position:absolute;left:52px;top:5px;width:1.2px;height:137px;background:#c0b8b3"></div><div style="position:absolute;left:56px;top:5px;width:1.2px;height:137px;background:#c0b8b3"></div><div style="position:absolute;left:4.5px;top:12px;width:1.5px;height:10px;background:#777"></div><div style="position:absolute;left:4.5px;top:33px;width:1.5px;height:9px;background:#666"></div><div style="position:absolute;left:4.5px;top:126px;width:1.5px;height:8px;background:#666"></div><div style="position:absolute;left:61px;top:44px;width:5px;height:5px;border:1.3px solid #c8c8c8;border-radius:50%"></div><div style="position:absolute;left:56px;top:80.5px;width:9px;height:1.8px;background:#c8c8c8"></div><div style="position:absolute;left:63px;top:79.5px;width:3.5px;height:3.5px;background:#c8c8c8;border-radius:50%"></div><div style="position:absolute;left:61px;top:84px;width:5px;height:5px;border:1.3px solid #c8c8c8;border-radius:50%"></div></div>
<div style="position:absolute;left:527.3px;top:137.8px;width:66.7px;height:146.9px;overflow:hidden;background:#111"><div style="position:absolute;left:5px;top:4px;width:57.7px;height:139px;background:linear-gradient(175deg,#fafafa 0%,#f0f0f0 55%,#d9d9d9 100%)"></div></div>
<div style="position:absolute;left:575px;top:137.5px;width:28.5px;height:28.5px;background:rgba(255,255,255,.72);border:1px solid rgba(200,200,200,.9);border-radius:50%"></div>
<div style="position:absolute;left:575px;top:172.0px;width:28.5px;height:28.5px;background:rgba(255,255,255,.72);border:1px solid rgba(200,200,200,.9);border-radius:50%"></div>
<div style="position:absolute;left:575px;top:206.8px;width:28.5px;height:28.5px;background:rgba(255,255,255,.72);border:1px solid rgba(200,200,200,.9);border-radius:50%"></div>
<svg style="position:absolute;left:582px;top:144px" width="15" height="15" viewBox="0 0 15 15"><g fill="none" stroke="#a9a9a9" stroke-width="1.3"><path d="M3.5 9.5 H2.5 Q2 9.5 2 9 V2.5 Q2 2 2.5 2 H8 Q8.5 2 8.5 2.5 V4"/><rect x="5.5" y="5" width="7" height="7.5" rx="1"/></g></svg>
<svg style="position:absolute;left:582px;top:179px" width="15" height="15" viewBox="0 0 15 15"><path d="M7.5 12.5 L2.2 7.2 Q.8 5.5 2 3.6 Q3.6 1.8 5.6 2.8 L7.5 4.4 L9.4 2.8 Q11.4 1.8 13 3.6 Q14.2 5.5 12.8 7.2Z" fill="none" stroke="#a9a9a9" stroke-width="1.3"/></svg>
<svg style="position:absolute;left:582px;top:213px" width="15" height="15" viewBox="0 0 15 15"><g fill="none" stroke="#a9a9a9" stroke-width="1.3"><circle cx="6.5" cy="6.5" r="4.3"/><path d="M9.7 9.7 L13.2 13.2 M6.5 4.5 V8.5 M4.5 6.5 H8.5"/></g></svg>
<div class="t" style="left:441px;top:312.38px;font-size:9px;color:#d8b27a;font-weight:400;">Входные двери</div>
<div class="t" style="left:441px;top:326.57px;font-size:11.5px;color:#1f1f1f;font-weight:700;">Входная дверь Норд 2</div>
<svg style="position:absolute;left:441.5px;top:342.8px" width="11" height="11" viewBox="0 0 10 10"><path d="M5 .5 L6.3 3.5 L9.7 3.8 L7.1 6.1 L7.9 9.5 L5 7.7 L2.1 9.5 L2.9 6.1 L.3 3.8 L3.7 3.5Z" fill="#f7a736"/></svg>
<svg style="position:absolute;left:455.7px;top:342.8px" width="11" height="11" viewBox="0 0 10 10"><path d="M5 .5 L6.3 3.5 L9.7 3.8 L7.1 6.1 L7.9 9.5 L5 7.7 L2.1 9.5 L2.9 6.1 L.3 3.8 L3.7 3.5Z" fill="#f7a736"/></svg>
<svg style="position:absolute;left:469.9px;top:342.8px" width="11" height="11" viewBox="0 0 10 10"><path d="M5 .5 L6.3 3.5 L9.7 3.8 L7.1 6.1 L7.9 9.5 L5 7.7 L2.1 9.5 L2.9 6.1 L.3 3.8 L3.7 3.5Z" fill="#f7a736"/></svg>
<svg style="position:absolute;left:484.1px;top:342.8px" width="11" height="11" viewBox="0 0 10 10"><path d="M5 .5 L6.3 3.5 L9.7 3.8 L7.1 6.1 L7.9 9.5 L5 7.7 L2.1 9.5 L2.9 6.1 L.3 3.8 L3.7 3.5Z" fill="#b7bbc7"/></svg>
<svg style="position:absolute;left:498.3px;top:342.8px" width="11" height="11" viewBox="0 0 10 10"><path d="M5 .5 L6.3 3.5 L9.7 3.8 L7.1 6.1 L7.9 9.5 L5 7.7 L2.1 9.5 L2.9 6.1 L.3 3.8 L3.7 3.5Z" fill="#b7bbc7"/></svg>
<div class="t" style="left:441px;top:429.85px;font-size:14px;color:#1f1f1f;font-weight:700;">51 200 ₽</div>
<div style="position:absolute;left:574.8px;top:423.7px;width:29px;height:29px;background:#d6ab5a;border-radius:50%"></div>
<svg style="position:absolute;left:581.8px;top:430.7px" width="15" height="15" viewBox="0 0 15 15"><path d="M.8 1.4 H3 L5 9.4 H12.2 L13.8 4 H3.8" fill="none" stroke="#1a1a1a" stroke-width="1.8" stroke-linejoin="round"/><circle cx="5.4" cy="12.6" r="1.75" fill="#1a1a1a"/><circle cx="11.6" cy="12.6" r="1.75" fill="#1a1a1a"/></svg>
<div class="t" style="left:441px;top:484.08px;font-size:9px;color:#8b909c">Размер полотна (мм): <span style="color:#2a2a2a">980 x 2050</span></div>
<div style="position:absolute;left:441px;top:498.4px;width:64.5px;height:22.5px;border:1px solid #c9c9c9;border-radius:3px;background:#fff"></div>
<div style="position:absolute;left:512.4px;top:498.4px;width:65.3px;height:22.5px;border-radius:3px;background:#7b8395"></div>
<div class="t" style="left:448.3px;top:504.97px;font-size:10.2px;color:#222;font-weight:400;">880 x 2050</div>
<div class="t" style="left:519.5px;top:504.97px;font-size:10.2px;color:#fff;font-weight:400;">980 x 2050</div>
<div class="t" style="left:441px;top:542.18px;font-size:9px;color:#8b909c">Открывание: <span style="color:#2a2a2a">ПРАВОЕ</span></div>
<div style="position:absolute;left:441px;top:556.5px;width:46.6px;height:22.8px;border:1px solid #c9c9c9;border-radius:3px;background:#fff"></div>
<div style="position:absolute;left:494px;top:556.5px;width:53.7px;height:22.8px;border-radius:3px;background:#7b8395"></div>
<div class="t" style="left:447.5px;top:562.67px;font-size:10.2px;color:#222;font-weight:400;">ЛЕВОЕ</div>
<div class="t" style="left:500.5px;top:562.67px;font-size:10.2px;color:#fff;font-weight:400;">ПРАВОЕ</div>
<div style="position:absolute;left:552px;top:533px;width:71.7px;height:23px;border:1px solid #2a2a2a;background:#fff"></div>
<div class="t" style="left:558.5px;top:539.31px;font-size:11.8px;color:#2a2a2a;font-weight:400;">980 x 2050</div>
<div class="t" style="left:441px;top:601.18px;font-size:9px;color:#8b909c">Внутренняя панель : <span style="color:#2a2a2a">6 мм Аляска</span></div>
<div class="t" style="left:441px;top:613.58px;font-size:9px;color:#2a2a2a;font-weight:400;">гладкая</div>
<div style="position:absolute;left:442.8px;top:629.7px;width:19.6px;height:19.6px;background:linear-gradient(180deg,#111 0 7%,transparent 7%),linear-gradient(90deg,#111 0 9%,#cbbca7 9% 91%,#111 91%);border-radius:50%;box-shadow:0 1px 2px rgba(0,0,0,.15)"></div>
<div style="position:absolute;left:472.0px;top:629.7px;width:19.6px;height:19.6px;background:linear-gradient(180deg,#111 0 7%,transparent 7%),linear-gradient(90deg,#111 0 9%,#b69c86 9% 91%,#111 91%);border-radius:50%;box-shadow:0 1px 2px rgba(0,0,0,.15)"></div>
<div style="position:absolute;left:501.2px;top:629.7px;width:19.6px;height:19.6px;background:linear-gradient(180deg,#111 0 7%,transparent 7%),linear-gradient(90deg,#111 0 9%,#e0dfdc 9% 91%,#111 91%);border-radius:50%;box-shadow:0 1px 2px rgba(0,0,0,.15)"></div>
<div style="position:absolute;left:530.4000000000001px;top:629.7px;width:19.6px;height:19.6px;background:#4b3630;border-radius:50%;box-shadow:0 1px 2px rgba(0,0,0,.15)"></div>
<div style="position:absolute;left:559.6px;top:629.7px;width:19.6px;height:19.6px;background:#2a1c1a;border-radius:50%;box-shadow:0 1px 2px rgba(0,0,0,.15)"></div>
<div style="position:absolute;left:442.8px;top:658.7px;width:19.6px;height:19.6px;background:#6a4530;border-radius:50%;box-shadow:0 1px 2px rgba(0,0,0,.15)"></div>
<div style="position:absolute;left:472.0px;top:658.7px;width:19.6px;height:19.6px;background:linear-gradient(180deg,transparent 30%,rgba(255,255,255,.7) 30% 36%,transparent 36% 62%,rgba(255,255,255,.7) 62% 68%,transparent 68%),linear-gradient(180deg,#111 0 7%,transparent 7%),linear-gradient(90deg,#111 0 9%,#e3e0da 9% 91%,#111 91%);border-radius:50%;box-shadow:0 1px 2px rgba(0,0,0,.15)"></div>
<div style="position:absolute;left:501.2px;top:658.7px;width:19.6px;height:19.6px;background:linear-gradient(90deg,#0d0d14 0 22%,transparent 22% 78%,#0d0d14 78%),linear-gradient(180deg,#a09e96,#c8c8c4 60%,#9a9a9a),linear-gradient(180deg,#111 0 7%,transparent 7%),linear-gradient(90deg,#111 0 9%,#8c8a82 9% 91%,#111 91%);border-radius:50%;box-shadow:0 1px 2px rgba(0,0,0,.15)"></div>
<div style="position:absolute;left:530.4000000000001px;top:658.7px;width:19.6px;height:19.6px;background:linear-gradient(110deg,transparent 55%,#dfe4ea 55% 70%,transparent 70%),linear-gradient(180deg,#c9d0d6,#8a939c),linear-gradient(180deg,#111 0 7%,transparent 7%),linear-gradient(90deg,#111 0 9%,#a4aab0 9% 91%,#111 91%);border-radius:50%;box-shadow:0 1px 2px rgba(0,0,0,.15)"></div>
<div style="position:absolute;left:559.6px;top:658.7px;width:19.6px;height:19.6px;background:linear-gradient(180deg,transparent 75%,rgba(255,255,255,.9) 75% 80%,transparent 80%),linear-gradient(180deg,#111 0 7%,transparent 7%),linear-gradient(90deg,#111 0 9%,#ebe8e3 9% 91%,#111 91%);border-radius:50%;box-shadow:0 1px 2px rgba(0,0,0,.15)"></div>
<div style="position:absolute;left:442.8px;top:687.7px;width:19.6px;height:19.6px;background:linear-gradient(180deg,transparent 35%,rgba(255,255,255,.9) 35% 41%,transparent 41%),linear-gradient(180deg,#111 0 7%,transparent 7%),linear-gradient(90deg,#111 0 9%,#e4e2de 9% 91%,#111 91%);border-radius:50%;box-shadow:0 1px 2px rgba(0,0,0,.15)"></div>
<div style="position:absolute;left:472.0px;top:687.7px;width:19.6px;height:19.6px;background:linear-gradient(180deg,transparent 45%,rgba(255,255,255,.9) 45% 53%,transparent 53% 80%,rgba(255,255,255,.8) 80% 86%,transparent 86%),linear-gradient(180deg,#111 0 7%,transparent 7%),linear-gradient(90deg,#111 0 9%,#c1ad97 9% 91%,#111 91%);border-radius:50%;box-shadow:0 1px 2px rgba(0,0,0,.15)"></div>
<div style="position:absolute;left:501.2px;top:687.7px;width:19.6px;height:19.6px;background:linear-gradient(180deg,#d8d8d6,#9fa09c),linear-gradient(180deg,#111 0 7%,transparent 7%),linear-gradient(90deg,#111 0 9%,#b2b2ae 9% 91%,#111 91%);border-radius:50%;box-shadow:0 1px 2px rgba(0,0,0,.15)"></div>
<div style="position:absolute;left:530.4000000000001px;top:687.7px;width:19.6px;height:19.6px;background:linear-gradient(180deg,transparent 78%,rgba(255,255,255,.85) 78% 84%,transparent 84%),repeating-linear-gradient(180deg,rgba(0,0,0,.12) 0 1px,transparent 1px 3px),#6d5240;border-radius:50%;box-shadow:0 1px 2px rgba(0,0,0,.15)"></div>
<div style="position:absolute;left:559.6px;top:687.7px;width:19.6px;height:19.6px;background:linear-gradient(180deg,transparent 78%,rgba(255,255,255,.7) 78% 84%,transparent 84%),repeating-linear-gradient(180deg,rgba(0,0,0,.12) 0 1px,transparent 1px 3px),#694d39;border-radius:50%;box-shadow:0 1px 2px rgba(0,0,0,.15)"></div>
<div style="position:absolute;left:442.8px;top:716.7px;width:19.6px;height:19.6px;background:linear-gradient(180deg,transparent 48%,rgba(255,255,255,.9) 48% 55%,transparent 55% 80%,rgba(255,255,255,.8) 80% 86%,transparent 86%),linear-gradient(180deg,#111 0 7%,transparent 7%),linear-gradient(90deg,#111 0 9%,#6e625a 9% 91%,#111 91%);border-radius:50%;box-shadow:0 1px 2px rgba(0,0,0,.15)"></div>
<div style="position:absolute;left:472.0px;top:716.7px;width:19.6px;height:19.6px;background:linear-gradient(180deg,transparent 58%,rgba(150,150,150,.8) 58% 63%,transparent 63% 80%,rgba(255,255,255,.9) 80% 86%,transparent 86%),#1e1e1e;border-radius:50%;box-shadow:0 1px 2px rgba(0,0,0,.15)"></div>
<div style="position:absolute;left:501.2px;top:716.7px;width:19.6px;height:19.6px;background:linear-gradient(180deg,transparent 58%,rgba(150,150,150,.8) 58% 63%,transparent 63% 80%,rgba(255,255,255,.9) 80% 86%,transparent 86%),#202020;border-radius:50%;box-shadow:0 1px 2px rgba(0,0,0,.15)"></div>
<div style="position:absolute;left:530.4000000000001px;top:716.7px;width:19.6px;height:19.6px;background:linear-gradient(180deg,#111 0 7%,transparent 7%),linear-gradient(90deg,#111 0 9%,#e8e6e3 9% 91%,#111 91%);border-radius:50%;box-shadow:0 1px 2px rgba(0,0,0,.15)"></div>
<div style="position:absolute;left:559.6px;top:716.7px;width:19.6px;height:19.6px;background:linear-gradient(180deg,transparent 22%,rgba(60,30,20,.6) 22% 30%,transparent 30% 48%,rgba(60,30,20,.6) 48% 55%,transparent 55%),#9a6e50;border-radius:50%;box-shadow:0 1px 2px rgba(0,0,0,.15)"></div>
<div style="position:absolute;left:442.8px;top:745.7px;width:19.6px;height:19.6px;background:linear-gradient(180deg,#111 0 7%,transparent 7%),linear-gradient(90deg,#111 0 9%,#787166 9% 91%,#111 91%);border-radius:50%;box-shadow:0 1px 2px rgba(0,0,0,.15)"></div>
<div style="position:absolute;left:472.0px;top:745.7px;width:19.6px;height:19.6px;background:linear-gradient(90deg,#1a0f0a 0 12%,transparent 12% 88%,#1a0f0a 88%),linear-gradient(180deg,#111 0 7%,transparent 7%),linear-gradient(90deg,#111 0 9%,#5f3b29 9% 91%,#111 91%);border-radius:50%;box-shadow:0 1px 2px rgba(0,0,0,.15)"></div>
<div style="position:absolute;left:501.2px;top:745.7px;width:19.6px;height:19.6px;background:#4a2c20;border-radius:50%;box-shadow:0 1px 2px rgba(0,0,0,.15)"></div>
<div style="position:absolute;left:530.4000000000001px;top:745.7px;width:19.6px;height:19.6px;background:linear-gradient(90deg,#1a0f0a 0 12%,transparent 12% 88%,#1a0f0a 88%),linear-gradient(180deg,#111 0 7%,transparent 7%),linear-gradient(90deg,#111 0 9%,#5c3826 9% 91%,#111 91%);border-radius:50%;box-shadow:0 1px 2px rgba(0,0,0,.15)"></div>
<div style="position:absolute;left:559.6px;top:745.7px;width:19.6px;height:19.6px;background:linear-gradient(180deg,#111 0 7%,transparent 7%),linear-gradient(90deg,#111 0 9%,#eeeeee 9% 91%,#111 91%);border-radius:50%;box-shadow:0 1px 2px rgba(0,0,0,.15)"></div>
<div style="position:absolute;left:442.8px;top:774.7px;width:19.6px;height:19.6px;background:linear-gradient(180deg,#111 0 7%,transparent 7%),linear-gradient(90deg,#111 0 9%,#e8e8e8 9% 91%,#111 91%);border-radius:50%;box-shadow:0 1px 2px rgba(0,0,0,.15)"></div>
<div style="position:absolute;left:472.0px;top:774.7px;width:19.6px;height:19.6px;background:linear-gradient(180deg,#111 0 7%,transparent 7%),linear-gradient(90deg,#111 0 9%,#f0eef2 9% 91%,#111 91%);border-radius:50%;box-shadow:0 1px 2px rgba(0,0,0,.15)"></div>
<div style="position:absolute;left:501.2px;top:774.7px;width:19.6px;height:19.6px;background:#3a1c14;border-radius:50%;box-shadow:0 1px 2px rgba(0,0,0,.15)"></div>
<div style="position:absolute;left:530.4000000000001px;top:774.7px;width:19.6px;height:19.6px;background:#3a1e16;border-radius:50%;box-shadow:0 1px 2px rgba(0,0,0,.15)"></div>
<div style="position:absolute;left:559.6px;top:774.7px;width:19.6px;height:19.6px;background:linear-gradient(180deg,#111 0 7%,transparent 7%),linear-gradient(90deg,#111 0 9%,#c6c0bb 9% 91%,#111 91%);border-radius:50%;box-shadow:0 1px 2px rgba(0,0,0,.15)"></div>
<div style="position:absolute;left:442.8px;top:803.7px;width:19.6px;height:19.6px;background:linear-gradient(180deg,#111 0 7%,transparent 7%),linear-gradient(90deg,#111 0 9%,#bcb4ae 9% 91%,#111 91%);border-radius:50%;box-shadow:0 1px 2px rgba(0,0,0,.15)"></div>
<div style="position:absolute;left:472.0px;top:803.7px;width:19.6px;height:19.6px;background:linear-gradient(180deg,#111 0 7%,transparent 7%),linear-gradient(90deg,#111 0 9%,#f4f4f4 9% 91%,#111 91%);border-radius:50%;box-shadow:0 1px 2px rgba(0,0,0,.15)"></div>
<div style="position:absolute;left:470.1px;top:801.8px;width:23.4px;height:23.4px;border:1px solid #6f7d9a;border-radius:50%"></div>
<div style="position:absolute;left:501.2px;top:803.7px;width:19.6px;height:19.6px;background:#6c737c;border-radius:50%;box-shadow:0 1px 2px rgba(0,0,0,.15)"></div>
<div style="position:absolute;left:530.4000000000001px;top:803.7px;width:19.6px;height:19.6px;background:linear-gradient(180deg,#111 0 7%,transparent 7%),linear-gradient(90deg,#111 0 9%,#d4d4d4 9% 91%,#111 91%);border-radius:50%;box-shadow:0 1px 2px rgba(0,0,0,.15)"></div>
<div style="position:absolute;left:559.6px;top:803.7px;width:19.6px;height:19.6px;background:#a8805e;border-radius:50%;box-shadow:0 1px 2px rgba(0,0,0,.15)"></div>
<div style="position:absolute;left:442.8px;top:832.7px;width:19.6px;height:19.6px;background:linear-gradient(180deg,#111 0 7%,transparent 7%),linear-gradient(90deg,#111 0 9%,#eceae4 9% 91%,#111 91%);border-radius:50%;box-shadow:0 1px 2px rgba(0,0,0,.15)"></div>
<div style="position:absolute;left:472.0px;top:832.7px;width:19.6px;height:19.6px;background:linear-gradient(180deg,#111 0 7%,transparent 7%),linear-gradient(90deg,#111 0 9%,#e2e2e2 9% 91%,#111 91%);border-radius:50%;box-shadow:0 1px 2px rgba(0,0,0,.15)"></div>
<div style="position:absolute;left:501.2px;top:832.7px;width:19.6px;height:19.6px;background:linear-gradient(180deg,#111 0 7%,transparent 7%),linear-gradient(90deg,#111 0 9%,#dcdad6 9% 91%,#111 91%);border-radius:50%;box-shadow:0 1px 2px rgba(0,0,0,.15)"></div>
<div class="t" style="left:441px;top:875.38px;font-size:9px;color:#8b909c">Отделка <span style="color:#2a2a2a;margin-left:3px">Металл-панель</span></div>
</body></html>
